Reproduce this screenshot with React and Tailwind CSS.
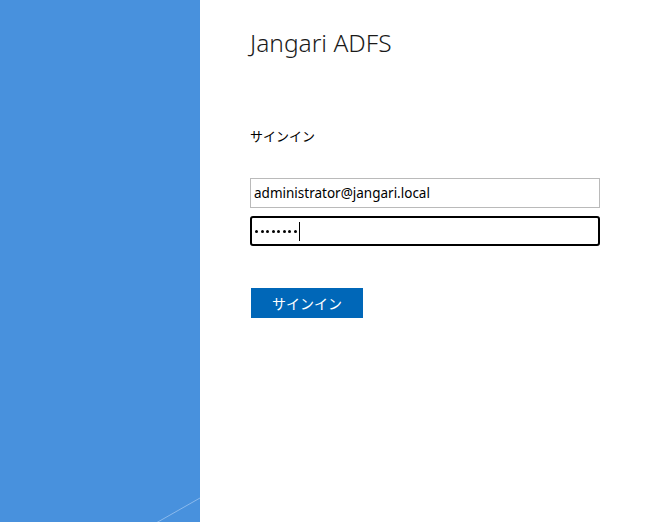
export default function App() {
  const dots = [0, 1, 2, 3, 4, 5, 6, 7]
  return (
    <div className="flex h-[522px] w-[664px] overflow-hidden bg-white font-['Noto_Sans','Noto_Sans_CJK_JP',sans-serif] text-black">
      <div className="relative h-full w-[200px] shrink-0 overflow-hidden bg-[#4891dd]">
        <svg className="absolute inset-0" width="200" height="522" viewBox="0 0 200 522">
          <line x1="200" y1="498" x2="156" y2="523" stroke="#8ab9ec" strokeWidth="1" />
        </svg>
      </div>
      <div className="flex w-[350px] flex-col pl-[50px] pt-[27px]">
        <h1 className="text-[24.5px] font-light leading-[32px] text-[#1a1a1a]">Jangari ADFS</h1>
        <p className="mt-[67px] text-[13px] leading-[20px]">サインイン</p>
        <div className="mt-[32px] flex h-[30px] w-[350px] items-center border border-[#bababa] px-[3px] text-[13.5px] text-black">
          administrator@jangari.local
        </div>
        <div className="mt-[8px] flex h-[30px] w-[350px] items-center rounded-[3px] border-2 border-black pl-[3px]">
          <div className="flex items-center gap-[2.5px] pt-[1px]">
            {dots.map((d) => (
              <span key={d} className="h-[3px] w-[3px] rounded-full bg-black" />
            ))}
          </div>
          <span className="ml-[2px] h-[19px] w-px bg-black" />
        </div>
        <button
          type="button"
          className="ml-px mt-[42px] flex h-[30px] w-[112px] items-center justify-center bg-[#0067b8] text-[14px] text-white"
        >
          サインイン
        </button>
      </div>
    </div>
  )
}
